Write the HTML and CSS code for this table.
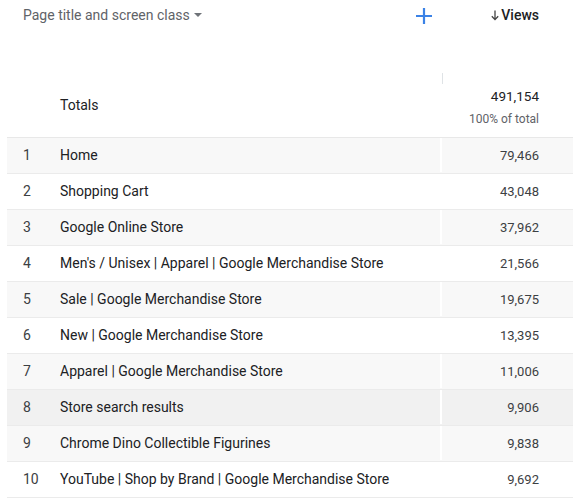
FILE: index.html
```html
<!DOCTYPE html>
<html>
<head>
<meta charset="utf-8">
<link rel="stylesheet" href="styles.css">
</head>
<body>
<div class="table">
  <div class="head">
    <div class="dim">Page title and screen class <span class="caret"></span></div>
    <div class="plus"><svg width="18" height="18" viewBox="0 0 18 18"><path d="M9 1v16M1 9h16" stroke="#3b82e6" stroke-width="2.2" fill="none"/></svg></div>
    <div class="metric"><svg class="arrow" width="8" height="11" viewBox="0 0 8 11"><path d="M4 0.5v9M0.8 6.2L4 9.6L7.2 6.2" stroke="#444" stroke-width="1.3" fill="none"/></svg>Views</div>
  </div>
  <div class="totals">
    <div class="tl">Totals</div>
    <div class="tv"><span class="handle"></span><div class="big">491,154</div><div class="pct">100% of total</div></div>
  </div>
  <div class="row alt"><div class="n">1</div><div class="name">Home</div><div class="v">79,466</div></div>
  <div class="row"><div class="n">2</div><div class="name">Shopping Cart</div><div class="v">43,048</div></div>
  <div class="row alt"><div class="n">3</div><div class="name">Google Online Store</div><div class="v">37,962</div></div>
  <div class="row"><div class="n">4</div><div class="name">Men's / Unisex | Apparel | Google Merchandise Store</div><div class="v">21,566</div></div>
  <div class="row alt"><div class="n">5</div><div class="name">Sale | Google Merchandise Store</div><div class="v">19,675</div></div>
  <div class="row"><div class="n">6</div><div class="name">New | Google Merchandise Store</div><div class="v">13,395</div></div>
  <div class="row alt"><div class="n">7</div><div class="name">Apparel | Google Merchandise Store</div><div class="v">11,006</div></div>
  <div class="row hover"><div class="n">8</div><div class="name">Store search results</div><div class="v">9,906</div></div>
  <div class="row alt"><div class="n">9</div><div class="name">Chrome Dino Collectible Figurines</div><div class="v">9,838</div></div>
  <div class="row"><div class="n">10</div><div class="name">YouTube | Shop by Brand | Google Merchandise Store</div><div class="v">9,692</div></div>
</div>
</body>
</html>
```
FILE: styles.css
```css
html, body { margin: 0; padding: 0; background: #fff; }
body { font-family: Roboto, "Noto Sans", sans-serif; color: #202124; width: 573px; overflow: hidden; }
.table { margin-left: 7px; width: 566px; }
.head { display: flex; align-items: center; height: 29px; }
.dim { width: 370px; padding-left: 16px; font-size: 14px; color: #5f6368; display: flex; align-items: center; gap: 4px; }
.caret { width: 0; height: 0; border-left: 4px solid transparent; border-right: 4px solid transparent; border-top: 4px solid #6f7378; margin-top: 1px; }
.plus { width: 62px; display: flex; justify-content: center; padding-top: 2px; }
.metric { flex: 1; display: flex; justify-content: flex-end; align-items: center; padding-right: 34px; font-size: 14px; font-weight: 500; color: #202124; }
.arrow { margin-right: 2px; margin-top: 1px; }
.totals { display: flex; height: 108px; margin-top: 1px; border-bottom: 1px solid #e8e8e8; box-sizing: border-box; }
.tl { width: 435px; padding-left: 53px; box-sizing: border-box; display: flex; align-items: center; font-size: 14px; padding-top: 42px; color: #202124; }
.tv { flex: 1; position: relative; text-align: right; padding-right: 34px; padding-top: 58px; }
.handle { position: absolute; left: 0; top: 43px; width: 1px; height: 11px; background: #dfe3e6; }
.big { font-size: 13.5px; color: #202124; line-height: 16px; }
.pct { font-size: 12px; color: #5f6368; line-height: 14px; margin-top: 8px; }
.row { display: flex; height: 36px; border-bottom: 1px solid #ebebeb; box-sizing: border-box; align-items: center; padding-bottom: 1px; }
.row.alt { background: #f8f8f8; }
.row.hover { background: #f1f1f1; }
.n { width: 37px; padding-left: 16px; box-sizing: border-box; font-size: 14px; color: #3c4043; }
.name { width: 398px; padding-left: 16px; box-sizing: border-box; font-size: 14px; color: #202124; height: 100%; display: flex; align-items: center; border-right: 2px solid #fff; }
.v { flex: 1; text-align: right; padding-right: 34px; font-size: 13px; color: #3c4043; }
```
